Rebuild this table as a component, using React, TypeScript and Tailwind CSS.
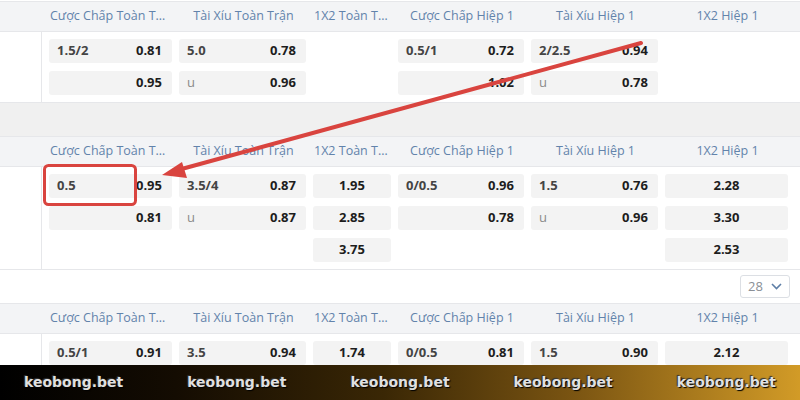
import React from 'react';

type Cell = { l?: string; r?: string; c?: string; u?: boolean };

const headers = [
  'Cược Chấp Toàn Trận',
  'Tài Xỉu Toàn Trận',
  '1X2 Toàn Trận',
  'Cược Chấp Hiệp 1',
  'Tài Xỉu Hiệp 1',
  '1X2 Hiệp 1',
];

const cols = 'grid grid-cols-[123px_127px_78px_126px_127px_123px] gap-x-[7px]';

const match1: Cell[][] = [
  [{ l: '1.5/2', r: '0.81' }, { r: '0.95' }],
  [{ l: '5.0', r: '0.78' }, { l: 'u', u: true, r: '0.96' }],
  [],
  [{ l: '0.5/1', r: '0.72' }, { r: '1.02' }],
  [{ l: '2/2.5', r: '0.94' }, { l: 'u', u: true, r: '0.78' }],
  [],
];

const match2: Cell[][] = [
  [{ l: '0.5', r: '0.95' }, { r: '0.81' }],
  [{ l: '3.5/4', r: '0.87' }, { l: 'u', u: true, r: '0.87' }],
  [{ c: '1.95' }, { c: '2.85' }, { c: '3.75' }],
  [{ l: '0/0.5', r: '0.96' }, { r: '0.78' }],
  [{ l: '1.5', r: '0.76' }, { l: 'u', u: true, r: '0.96' }],
  [{ c: '2.28' }, { c: '3.30' }, { c: '2.53' }],
];

const match3: Cell[][] = [
  [{ l: '0.5/1', r: '0.91' }],
  [{ l: '3.5', r: '0.94' }],
  [{ c: '1.74' }],
  [{ l: '0/0.5', r: '0.81' }],
  [{ l: '1.5', r: '0.90' }],
  [{ c: '2.12' }],
];

function HeaderRow() {
  return (
    <div className="h-[30px] bg-[#f3f4f6] border-b border-[#e6e7ea] pl-[50px] flex items-center">
      <div className={cols}>
        {headers.map((h, i) => (
          <div
            key={h}
            className={`truncate text-center text-[12.5px] text-[#6283ab] leading-none ${i === 0 ? 'pr-[4px]' : ''}`}
          >
            {h}
          </div>
        ))}
      </div>
    </div>
  );
}

function OddCell({ cell }: { cell: Cell }) {
  if (cell.c) {
    return (
      <div className="h-[24px] rounded-[3px] bg-[#f3f3f3] flex items-center justify-center text-[13px] font-bold text-[#1d1d1d]">
        {cell.c}
      </div>
    );
  }
  return (
    <div className="h-[24px] rounded-[3px] bg-[#f3f3f3] flex items-center justify-between pl-[8px] pr-[10px] text-[13px]">
      <span className={cell.u ? 'text-[#8a8a8a] font-normal' : 'font-bold text-[#444]'}>{cell.l ?? ''}</span>
      <span className="font-bold text-[#1d1d1d]">{cell.r}</span>
    </div>
  );
}

function DataRow({ data }: { data: Cell[][] }) {
  return (
    <div className="flex bg-white border-b border-[#e6e7ea]">
      <div className="w-[42px] border-r border-[#e6e7ea]" />
      <div className={`${cols} pl-[7px] py-[7px]`}>
        {data.map((col, i) => (
          <div key={i} className="flex flex-col gap-[8px]">
            {col.map((cell, j) => (
              <OddCell key={j} cell={cell} />
            ))}
          </div>
        ))}
      </div>
    </div>
  );
}

export default function App() {
  return (
    <div
      className="relative w-[800px] h-[400px] overflow-hidden bg-white"
      style={{ fontFamily: '"Open Sans", "Noto Sans", sans-serif' }}
    >
      <div className="h-[2px] bg-white border-b border-[#e6e7ea]" />
      <HeaderRow />
      <DataRow data={match1} />
      <div className="h-[34px] bg-[#f0f0f0] border-b border-[#e6e7ea]" />
      <HeaderRow />
      <DataRow data={match2} />
      <div className="h-[34px] bg-white flex items-center justify-end pr-[10px] border-b border-[#e6e7ea]">
        <div className="w-[50px] h-[23px] border border-[#dcdfe4] rounded-[3px] flex items-center justify-between pl-[7px] pr-[7px] text-[13px] text-[#8a8f96]">
          <span>28</span>
          <svg width="11" height="7" viewBox="0 0 11 7" fill="none" stroke="#5d7ea6" strokeWidth="1.6">
            <path d="M1 1l4.5 4.5L10 1" />
          </svg>
        </div>
      </div>
      <HeaderRow />
      <DataRow data={match3} />

      <div className="absolute left-0 right-0 top-[365px] h-[35px] flex items-center justify-between px-[24px] bg-[linear-gradient(90deg,#000_0%,#140c02_22%,#3a2705_48%,#7b5512_72%,#d29b27_100%)]">
        {[0, 1, 2, 3, 4].map((i) => (
          <span
            key={i}
            className="text-[14px] font-bold text-[#e0e0e0] [text-shadow:1px_1px_1px_#000,-1px_-1px_1px_#333]"
            style={{ fontFamily: '"DejaVu Sans", sans-serif' }}
          >
            keobong.bet
          </span>
        ))}
      </div>

      <svg className="absolute inset-0 pointer-events-none" width="800" height="400">
        <rect x="44.5" y="165.5" width="91" height="39" rx="4" fill="none" stroke="#d9443f" strokeWidth="3" />
        <line x1="641" y1="43" x2="178" y2="170" stroke="#d9443f" strokeWidth="4" strokeLinecap="round" />
        <polygon points="162,175 182,162 187,178" fill="#d9443f" />
      </svg>
    </div>
  );
}
